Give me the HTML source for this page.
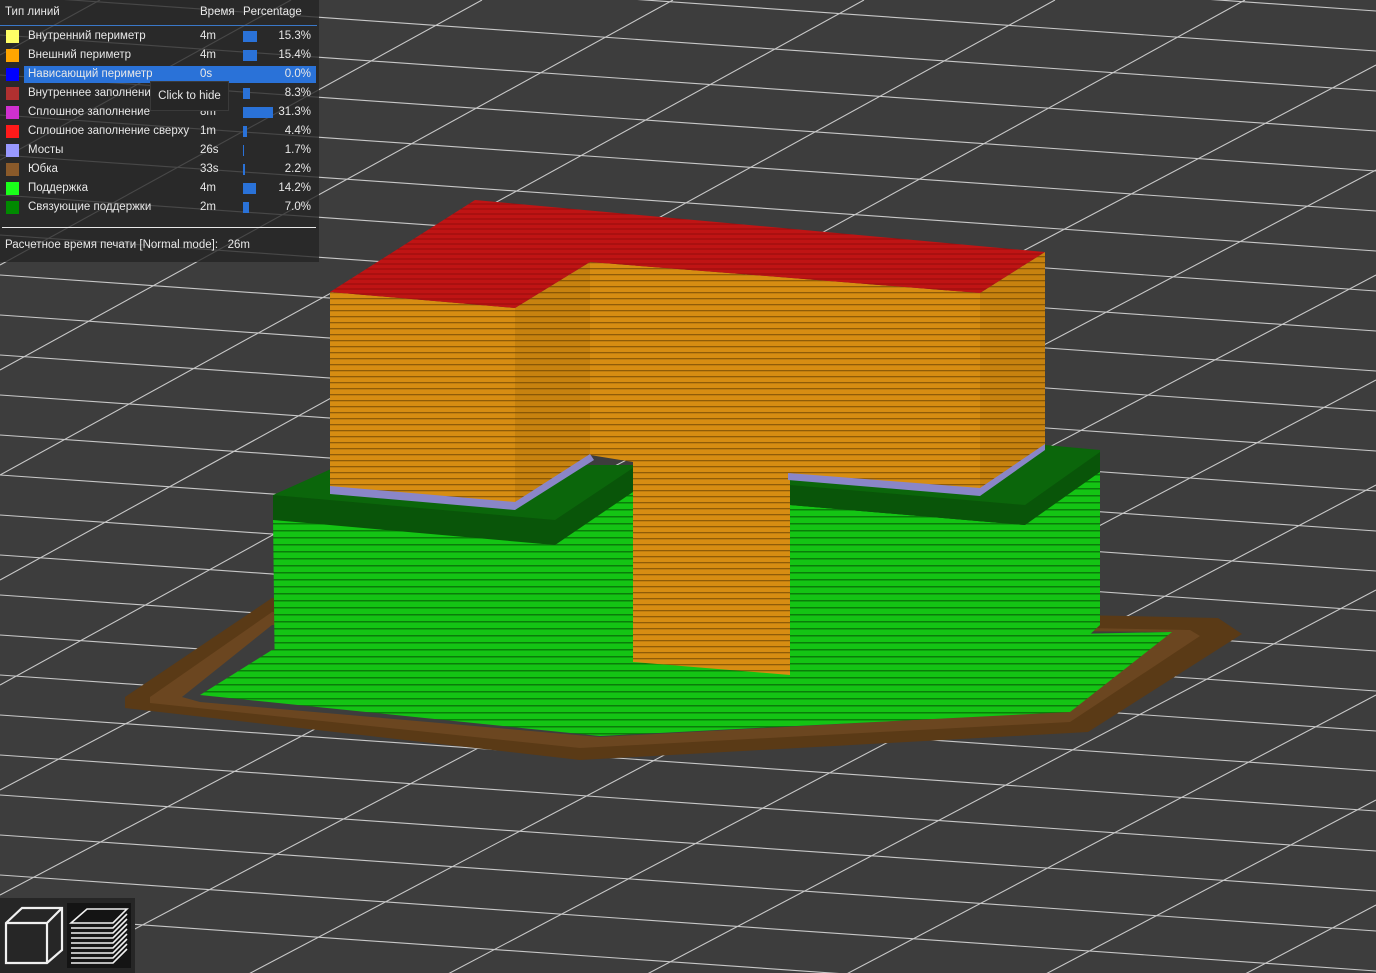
<!DOCTYPE html>
<html><head><meta charset="utf-8"><style>
html,body{margin:0;width:1376px;height:973px;overflow:hidden;background:#3d3d3d;font-family:"Liberation Sans","Noto Sans CJK SC",sans-serif;}
svg{position:absolute;left:0;top:0}
#leg{position:absolute;left:0;top:0;width:319px;height:262px;background:rgba(36,36,36,0.78);color:#e8e8e8;font-size:11.5px;}
.row{position:absolute;left:0;height:17px;width:319px;line-height:17px}
.sw{position:absolute;left:6px;top:2px;width:13px;height:13px}
.nm{position:absolute;left:28px}
.tm{position:absolute;left:200px}
.bar{position:absolute;left:243px;top:3px;height:11px;background:#2a72d8}
.pc{position:absolute;right:8px}
</style></head><body>
<svg width="1376" height="973" viewBox="0 0 1376 973">
<defs>
<pattern id="po" width="8" height="6" patternUnits="userSpaceOnUse"><rect width="8" height="6" fill="#d78d12"/><rect y="4" width="8" height="1.3" fill="#8f5c08"/></pattern>
<pattern id="pg" width="8" height="7" patternUnits="userSpaceOnUse"><rect width="8" height="7" fill="#14c414"/><rect y="5" width="8" height="1.5" fill="#0a7d0a"/></pattern>
<pattern id="pr" width="8" height="5" patternUnits="userSpaceOnUse"><rect width="8" height="5" fill="#bf1414"/><rect y="3.5" width="8" height="1" fill="#950c0c"/></pattern>
</defs>
<g stroke="#c8c8c8" stroke-width="1.1" fill="none">
<path d="M0 -85 L1376 11 M0 -45 L1376 51 M0 -5 L1376 91 M0 35 L1376 131 M0 75 L1376 171 M0 115 L1376 211 M0 155 L1376 251 M0 195 L1376 291 M0 235 L1376 331 M0 275 L1376 371 M0 315 L1376 411 M0 355 L1376 451 M0 395 L1376 491 M0 435 L1376 531 M0 475 L1376 571 M0 515 L1376 611 M0 555 L1376 651 M0 595 L1376 691 M0 635 L1376 731 M0 675 L1376 771 M0 715 L1376 811 M0 755 L1376 851 M0 795 L1376 891 M0 835 L1376 931 M0 875 L1376 971 M0 915 L1376 1011"/>
<path d="M0 55 L100 0 M0 160 L291 0 M0 265 L482 0 M0 370 L673 0 M0 475 L864 0 M0 580 L1055 0 M0 685 L1245 0 M0 790 L1376 65 M0 895 L1376 170 M0 1000 L1376 275 M0 1105 L1376 380 M0 1210 L1376 485 M0 1315 L1376 590 M0 1420 L1376 695 M0 1525 L1376 800 M0 1630 L1376 905 M0 1735 L1376 1010"/>
</g>
<polygon points="125,697 272,598 1218,618 1242,634 1088,732 580,760 125,708" fill="#5a3a16"/>
<polygon points="150,697 272,612 1190,630 1200,636 1070,722 580,748 150,703" fill="#6b4620"/>
<polygon points="182,697 272,625 1170,632 1060,712 600,737 200,702" fill="#3d3d3d"/>
<polygon points="200,695 272,650 1172,632 1070,712 600,736" fill="url(#pg)"/>
<polygon points="273,515 555,545 555,717 275,690" fill="url(#pg)"/>
<polygon points="555,545 633,490 633,665 555,717" fill="url(#pg)"/>
<polygon points="273,495 340,465 633,465 633,490 555,545 273,515" fill="#0b660b"/>
<polygon points="273,495 555,520 555,545 273,520" fill="#095509"/>
<polygon points="555,520 633,468 633,492 555,545" fill="#095509"/>
<polygon points="790,505 1025,525 1025,695 790,675" fill="url(#pg)"/>
<polygon points="1025,525 1100,470 1100,625 1025,695" fill="url(#pg)"/>
<polygon points="790,478 1045,445 1100,450 1100,470 1025,525 790,505" fill="#0b660b"/>
<polygon points="790,485 1025,505 1025,525 790,505" fill="#095509"/>
<polygon points="1025,505 1100,452 1100,472 1025,525" fill="#095509"/>
<polygon points="330,292 515,308 515,505 330,490" fill="url(#po)"/>
<polygon points="515,308 590,262 590,455 515,505" fill="url(#po)"/>
<polygon points="515,308 590,262 590,455 515,505" fill="#6a4000" opacity="0.15"/>
<polygon points="590,262 980,293 980,490 790,475 790,675 633,662 633,462 590,455" fill="url(#po)"/>
<polygon points="980,293 1045,252 1045,445 980,490" fill="url(#po)"/>
<polygon points="980,293 1045,252 1045,445 980,490" fill="#6a4000" opacity="0.15"/>
<polygon points="330,292 475,200 1045,252 980,293 590,262 515,308" fill="url(#pr)"/>
<polygon points="330,486 515,502 590,454 594,460 515,510 330,494" fill="#8a86c8"/>
<polygon points="788,473 980,488 1045,444 1045,450 980,496 788,480" fill="#8a86c8"/>
<g transform="translate(0,890)">
<rect x="0" y="8" width="135" height="75" fill="#262626"/>
<rect x="67" y="13" width="64" height="65" fill="#141414"/>
<g stroke="#f0f0f0" stroke-width="2.2" fill="none"><path d="M6 33 L22 18 L62 18 L62 60 L47 73 L6 73 Z M6 33 L47 33 L62 18 M47 33 L47 73"/></g>
<g stroke="#f0f0f0" stroke-width="1.6" fill="none"><path d="M71 33 L87 19 L127 19 L113 33 Z M71 38 H113 L127 24 M71 43 H113 L127 29 M71 48 H113 L127 34 M71 53 H113 L127 39 M71 58 H113 L127 44 M71 63 H113 L127 49 M71 68 H113 L127 54 M71 73 H113 L127 59"/></g>
</g>
</svg>
<div id="leg">
<div style="position:absolute;left:5px;top:6px">Тип линий</div>
<div style="position:absolute;left:200px;top:6px">Время</div>
<div style="position:absolute;left:243px;top:6px">Percentage</div>
<div style="position:absolute;left:0;top:25px;width:317px;height:1px;background:#3a78c8"></div>
<div class="row" style="top:28px"><span class="sw" style="background:#ffff66"></span><span class="nm">Внутренний периметр</span><span class="tm">4m</span><span class="bar" style="width:14px"></span><span class="pc">15.3%</span></div>
<div class="row" style="top:47px"><span class="sw" style="background:#ffa500"></span><span class="nm">Внешний периметр</span><span class="tm">4m</span><span class="bar" style="width:14px"></span><span class="pc">15.4%</span></div>
<div class="row" style="top:66px"><span class="sw" style="background:#0000ff"></span><span style="position:absolute;left:24px;top:0;width:292px;height:17px;background:#2a72d8"></span><span class="nm">Нависающий периметр</span><span class="tm">0s</span><span class="pc">0.0%</span></div>
<div class="row" style="top:85px"><span class="sw" style="background:#b03030"></span><span class="nm">Внутреннее заполнение</span><span class="tm">1m</span><span class="bar" style="width:7px"></span><span class="pc">8.3%</span></div>
<div class="row" style="top:104px"><span class="sw" style="background:#d030d0"></span><span class="nm">Сплошное заполнение</span><span class="tm">8m</span><span class="bar" style="width:30px"></span><span class="pc">31.3%</span></div>
<div class="row" style="top:123px"><span class="sw" style="background:#ff1a1a"></span><span class="nm">Сплошное заполнение сверху</span><span class="tm">1m</span><span class="bar" style="width:4px"></span><span class="pc">4.4%</span></div>
<div class="row" style="top:142px"><span class="sw" style="background:#9999ff"></span><span class="nm">Мосты</span><span class="tm">26s</span><span class="bar" style="width:1px"></span><span class="pc">1.7%</span></div>
<div class="row" style="top:161px"><span class="sw" style="background:#8a5a2a"></span><span class="nm">Юбка</span><span class="tm">33s</span><span class="bar" style="width:2px"></span><span class="pc">2.2%</span></div>
<div class="row" style="top:180px"><span class="sw" style="background:#1aff1a"></span><span class="nm">Поддержка</span><span class="tm">4m</span><span class="bar" style="width:13px"></span><span class="pc">14.2%</span></div>
<div class="row" style="top:199px"><span class="sw" style="background:#008a00"></span><span class="nm">Связующие поддержки</span><span class="tm">2m</span><span class="bar" style="width:6px"></span><span class="pc">7.0%</span></div>
<div style="position:absolute;left:150px;top:81px;width:77px;height:28px;background:#262626;border:1px solid #3a3a3a;line-height:28px;text-align:center">Click to hide</div>
<div style="position:absolute;left:2px;top:227px;width:314px;height:1px;background:#e8e8e8"></div>
<div style="position:absolute;left:5px;top:239px">Расчетное время печати [Normal mode]:&nbsp;&nbsp;&nbsp;26m</div>
</div>
</body></html>
